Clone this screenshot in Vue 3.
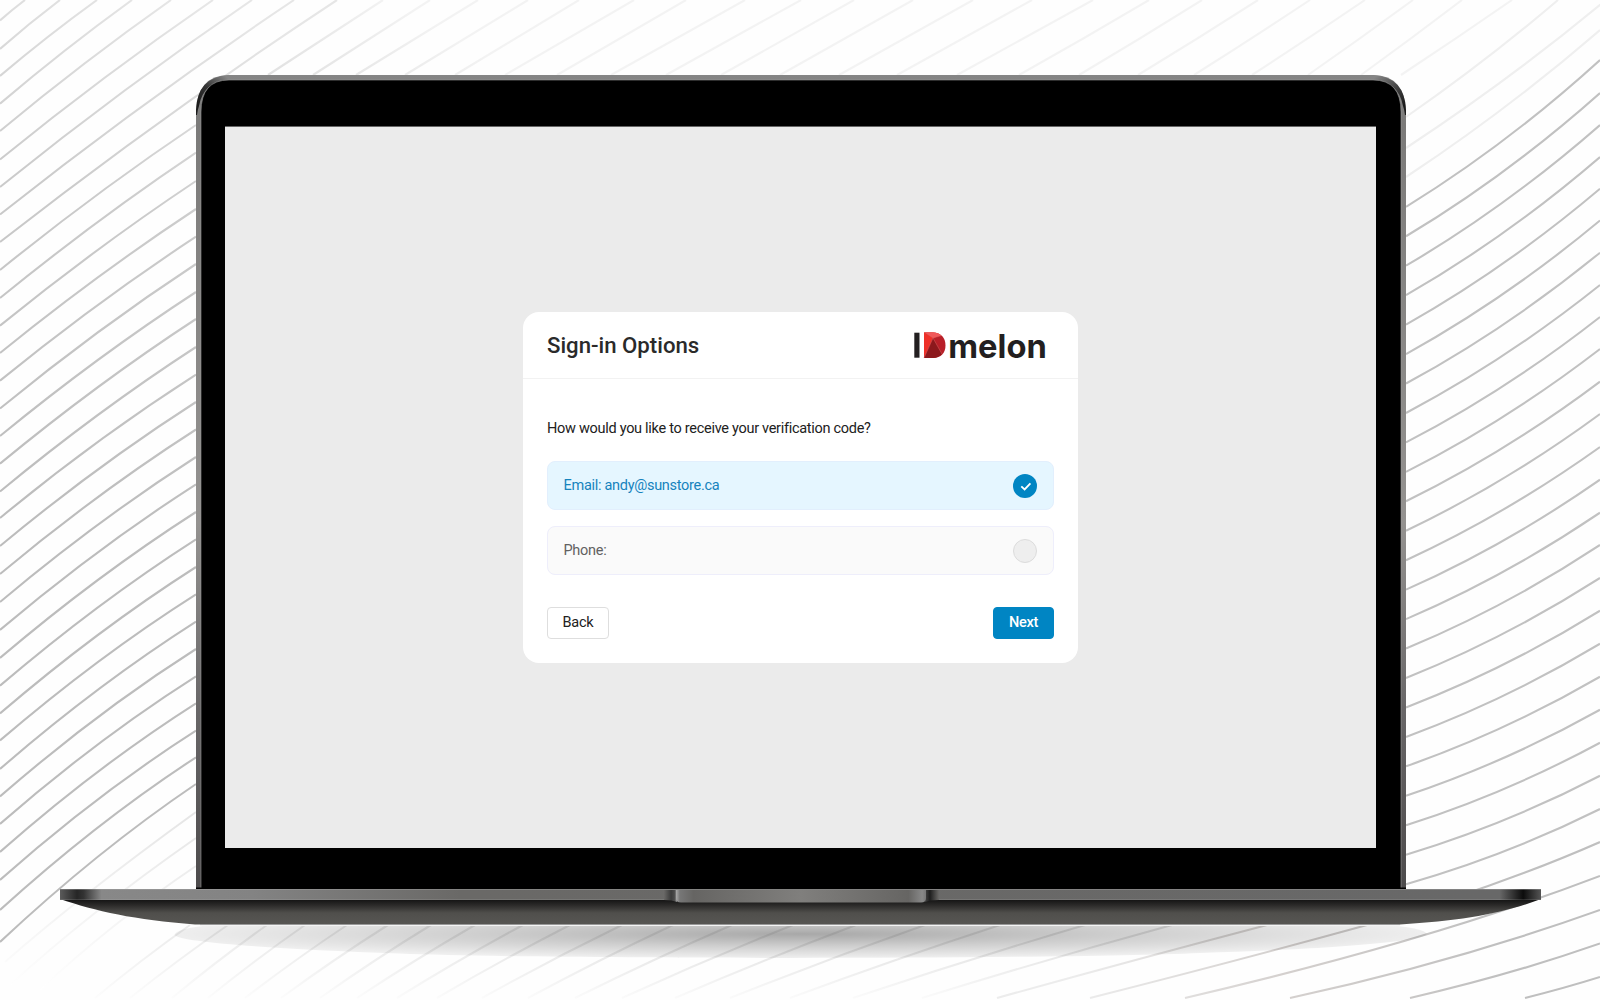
<script setup>
import { ref } from 'vue'

const options = [
  { id: 'email', label: 'Email: andy@sunstore.ca' },
  { id: 'phone', label: 'Phone:' },
]
const selected = ref('email')

const curve = (x0, y0, x1, y1, bx, by) =>
  `M${x0} ${y0}Q${(x0 + x1) / 2 + bx} ${(y0 + y1) / 2 + by} ${x1} ${y1}`

// Lines leaving the left edge of the page towards the laptop lid.
const leftStarts = [
  270, 298, 325.7, 353, 380.7, 408.5, 436, 463.7, 491.5, 518, 546, 574, 602,
  630, 658, 685.7, 713.5, 740.5, 769, 796.5, 824, 852, 880, 910, 942,
]
const leftEnds = [
  125, 152.7, 181, 209, 236.7, 264, 292, 319, 347, 374.7, 402, 429.5, 457,
  484.3, 512, 539.3, 567, 594.3, 621.7, 649, 676.3, 703.3, 730.7, 757.3, 784,
]
const leftLines = leftStarts.map((y, i) => curve(0, y, 196, leftEnds[i], -1, -6 - i * 0.25))

const cornerLines = [[20.5, 25], [49, 60], [76, 97], [103.7, 132], [131, 171], [159.5, 213], [187, 252], [214.5, 294], [242, 337]]
  .map(([y, x]) => curve(0, y, x, 0, -x * 0.012, -x * 0.022))

// Lines between the lid and the top edge of the page.
const topLines = [
  [268, 383], [313, 430], [356, 478], [405, 528], [455, 579], [505, 634],
  [557, 686], [611, 745], [666, 801], [721, 854], [780, 913], [839, 973],
  [897, 1032], [957, 1093], [1019, 1149], [1079, 1202], [1138, 1258],
  [1194, 1310], [1252, 1365], [1308, 1413], [1361, 1462], [1401, 1512],
].map(([a, b]) => curve(a, 75, b, 0, 0, a > 1000 ? 1 : 0))
const topRightLines = [
  curve(1406, 117, 1558, 0, 4, 3),
  curve(1406, 148, 1606, 0, 5, 5),
  curve(1406, 177, 1600, 30, 5, 6),
]

// Lines right of the lid.
const rightEnds = [
  60, 93, 125, 157, 188.7, 220.5, 252.7, 285, 317, 349, 381.7, 414, 447, 479.7,
  512.7, 545, 578, 610.7, 643.7, 676.7, 709.7, 742.7, 775.7, 809,
]
const rightLines = rightEnds.map((y, i) => curve(1406, 206.8 + i * 29.45, 1600, y, 3, 12 - i * 0.12))

const lowerRightLines = [
  'M997 998Q1130 961 1267 925Q1340 907 1406 884',
  'M1090 998Q1240 960 1367 925Q1500 886 1600 842',
  'M1185 998Q1430 941 1600 876',
  'M1290 998Q1455 962 1600 910',
  'M1410 998Q1510 975 1600 943.5',
  'M1525 998Q1565 988 1600 977',
]

const bottomLines = [
  [190, 95], [228, 130], [267, 172], [305, 208], [347, 245], [388, 281],
  [431, 320], [475, 357], [523, 397], [570, 437], [622, 482], [673, 528],
  [732, 575], [793, 622], [856, 675], [925, 730], [1000, 790], [1085, 853], [1172, 922],
].map(([a, b]) => ({ d: curve(b, 998, a, 925, -1, -2), opacity: Math.min(1, 0.4 + a / 1300) }))
const lowerLeftLines = [
  'M5 962Q80 896 196 812',
  'M10 985Q90 912 196 838',
  'M40 990Q110 924 196 866',
]
</script>

<template>
  <main class="stage">
    <svg class="scene" viewBox="0 0 1600 1000" aria-hidden="true">
      <defs>
        <linearGradient id="leftInk" gradientUnits="userSpaceOnUse" x1="0" y1="500" x2="180" y2="0">
          <stop offset="0" stop-color="#bcbcbc" />
          <stop offset="0.6" stop-color="#cbcbcb" />
          <stop offset="1" stop-color="#e6e6e6" />
        </linearGradient>
        <linearGradient id="topInk" gradientUnits="userSpaceOnUse" x1="250" y1="90" x2="330" y2="-40">
          <stop offset="0" stop-color="#dedede" />
          <stop offset="1" stop-color="#f3f3f3" />
        </linearGradient>
        <linearGradient id="bottomInk" gradientUnits="userSpaceOnUse" x1="0" y1="915" x2="0" y2="1000">
          <stop offset="0" stop-color="#777" stop-opacity="0.3" />
          <stop offset="1" stop-color="#777" stop-opacity="0.02" />
        </linearGradient>
        <linearGradient id="fadeInk" gradientUnits="userSpaceOnUse" x1="0" y1="820" x2="0" y2="990">
          <stop offset="0" stop-color="#e6e6e6" />
          <stop offset="1" stop-color="#fff" />
        </linearGradient>
        <linearGradient id="lowerRightInk" gradientUnits="userSpaceOnUse" x1="1080" y1="1000" x2="1500" y2="920">
          <stop offset="0" stop-color="#ececec" />
          <stop offset="0.5" stop-color="#d3cfcd" />
          <stop offset="1" stop-color="#bfbfbf" />
        </linearGradient>
        <linearGradient id="rim" x1="0" y1="0" x2="0" y2="1">
          <stop offset="0" stop-color="#858585" />
          <stop offset="0.06" stop-color="#7b7a79" />
          <stop offset="0.55" stop-color="#949290" />
          <stop offset="0.78" stop-color="#686667" />
          <stop offset="1" stop-color="#4c4a4b" />
        </linearGradient>
        <linearGradient id="cornerL" gradientUnits="userSpaceOnUse" x1="226" y1="76" x2="197" y2="104">
          <stop offset="0" stop-color="#858585" />
          <stop offset="0.55" stop-color="#333" />
          <stop offset="1" stop-color="#1b1b1b" />
        </linearGradient>
        <linearGradient id="cornerR" gradientUnits="userSpaceOnUse" x1="1376" y1="76" x2="1405" y2="104">
          <stop offset="0" stop-color="#858585" />
          <stop offset="0.55" stop-color="#444" />
          <stop offset="1" stop-color="#1b1b1b" />
        </linearGradient>
        <linearGradient id="deck" gradientUnits="userSpaceOnUse" x1="60" y1="0" x2="1541" y2="0">
          <stop offset="0" stop-color="#5b5b5b" />
          <stop offset="0.0115" stop-color="#262626" />
          <stop offset="0.016" stop-color="#333" />
          <stop offset="0.028" stop-color="#888" />
          <stop offset="0.13" stop-color="#838383" />
          <stop offset="0.27" stop-color="#6a6967" />
          <stop offset="0.972" stop-color="#686868" />
          <stop offset="0.984" stop-color="#222" />
          <stop offset="0.988" stop-color="#0c0c0c" />
          <stop offset="1" stop-color="#555" />
        </linearGradient>
        <linearGradient id="belly" x1="0" y1="0" x2="0" y2="1">
          <stop offset="0" stop-color="#111" />
          <stop offset="0.25" stop-color="#2c2b2a" />
          <stop offset="0.55" stop-color="#504f4c" />
          <stop offset="1" stop-color="#575653" />
        </linearGradient>
        <linearGradient id="notch" x1="0" y1="0" x2="1" y2="0">
          <stop offset="0" stop-color="#aaa" />
          <stop offset="0.015" stop-color="#777" />
          <stop offset="0.07" stop-color="#666563" />
          <stop offset="0.5" stop-color="#807f7d" />
          <stop offset="0.93" stop-color="#666563" />
          <stop offset="0.985" stop-color="#888" />
          <stop offset="1" stop-color="#777" />
        </linearGradient>
        <linearGradient id="notchSideL" x1="0" y1="0" x2="1" y2="0">
          <stop offset="0" stop-color="#696866" />
          <stop offset="0.55" stop-color="#3a3a3a" />
          <stop offset="0.8" stop-color="#4a4a4a" />
          <stop offset="1" stop-color="#999" />
        </linearGradient>
        <linearGradient id="notchSideR" x1="0" y1="0" x2="1" y2="0">
          <stop offset="0" stop-color="#444" />
          <stop offset="0.35" stop-color="#1e1e1e" />
          <stop offset="1" stop-color="#696866" />
        </linearGradient>
        <radialGradient id="shade" gradientUnits="userSpaceOnUse" cx="0" cy="0" r="1" gradientTransform="translate(801 934) scale(630 24)">
          <stop offset="0" stop-color="#000" stop-opacity="0.34" />
          <stop offset="0.5" stop-color="#000" stop-opacity="0.19" />
          <stop offset="1" stop-color="#000" stop-opacity="0.06" />
        </radialGradient>
      </defs>

      <g class="lines">
        <path v-for="d in cornerLines" :key="d" :d="d" stroke="url(#leftInk)" />
        <path v-for="d in leftLines" :key="d" :d="d" stroke="url(#leftInk)" />
        <path v-for="d in topLines" :key="d" :d="d" stroke="url(#topInk)" />
        <path v-for="d in topRightLines" :key="d" :d="d" stroke="#efefef" />
        <path v-for="d in rightLines" :key="d" :d="d" stroke="#c1c1c1" />
        <path v-for="d in lowerRightLines" :key="d" :d="d" stroke="url(#lowerRightInk)" />
        <path v-for="d in lowerLeftLines" :key="d" :d="d" stroke="url(#fadeInk)" />
      </g>

      <path d="M174.500 935C176 930 192 926.500 215 925H1385C1410 926.500 1425 930 1427 934C1420 942 1330 949 1200 953C1050 959.500 550 959.500 400 953.500C270 949 180 942 174.500 935Z" fill="url(#shade)" />
      <g class="lines">
        <path v-for="line in bottomLines" :key="line.d" :d="line.d" :opacity="line.opacity" stroke="url(#bottomInk)" />
      </g>

      <path d="M196 890V115Q196 75 229 75H1373Q1406 75 1406 115V890Z" fill="url(#rim)" />
      <path d="M196 115V110Q197 77 229 75V80Q203 82 199 106Q197.500 110 197 115Z" fill="url(#cornerL)" />
      <path d="M1406 115V110Q1405 77 1373 75V80Q1399 82 1403 106Q1404.500 110 1405 115Z" fill="url(#cornerR)" />
      <path d="M201 890V112Q201 80 229 80H1373Q1401 80 1401 112V890Z" stroke="#9a9a9a" stroke-width="0.6" />
      <rect x="196" y="887.500" width="1210" height="2" />
      <rect x="225" y="126" width="1151" height="1" fill="#666" />

      <path d="M60 899C95 911 135 920 195 924.500H1400C1462 921 1505 913 1541 899Z" fill="url(#belly)" />
      <rect x="200" y="924" width="1200" height="1" fill="#999" />
      <rect x="200" y="925" width="1200" height="1" fill="#f4f4f4" />
      <rect x="60" y="889" width="1481" height="11" fill="url(#deck)" />
      <rect x="60" y="889" width="1481" height="1" fill="#aaa" fill-opacity="0.4" />
      <rect x="60" y="899" width="1481" height="1" fill="#bbb" fill-opacity="0.18" />
      <path d="M664 890H677V902Q672 900 664 900Z" fill="url(#notchSideL)" />
      <path d="M925 890H939V900Q930 900 925 902Z" fill="url(#notchSideR)" />
      <path d="M676 890H926V898Q926 902.500 921 902.500H681Q676 902.500 676 898Z" fill="url(#notch)" />
    </svg>

    <section class="screen">
      <form class="card" @submit.prevent>
        <header class="card-head">
          <h1>Sign-in Options</h1>
          <svg class="logo" viewBox="0 -5 134 44" role="img" aria-label="IDmelon">
            <rect x="0.300" y="4.700" width="5.200" height="25" fill="#231f20" />
            <path d="M10 4.500H19C27 4.500 31.500 10 31.500 17.500S27 30 19 30H10Z" fill="#b81f28" />
            <path d="M10 4.500H19Q24 4.500 27 7.500L19 10L10 30Z" fill="#ee3028" />
            <path d="M11 4.500H19Q24 4.500 27.500 7.500L19 10Z" fill="#f0595a" />
            <path d="M19 10L10 30H19Q24 30 28 26Z" fill="#8c181c" />
            <path d="M19 10L10 30M19 10L28 26M11 4.500L19 10L27.500 7.500" fill="none" stroke="#d96360" stroke-width="0.500" />
            <text x="34.300" y="29.700" textLength="98.500" lengthAdjust="spacingAndGlyphs">melon</text>
          </svg>
        </header>

        <div class="card-body">
          <p>How would you like to receive your verification code?</p>
          <div class="options">
            <button
              v-for="option in options"
              :key="option.id"
              type="button"
              class="option"
              :class="{ active: selected === option.id }"
              @click="selected = option.id"
            >
              <span class="label">{{ option.label }}</span>
              <span class="mark">
                <svg v-if="selected === option.id" viewBox="0 0 24 24" aria-hidden="true">
                  <path d="M8.300 12.300L11.600 15.400L17.400 9.400" />
                </svg>
              </span>
            </button>
          </div>
          <footer>
            <button type="button" class="btn">Back</button>
            <button type="submit" class="btn primary">Next</button>
          </footer>
        </div>
      </form>
    </section>
  </main>
</template>

<style>
body {
  margin: 0;
  background: #fff;
}
</style>

<style scoped>
.stage {
  position: relative;
  box-sizing: border-box;
  width: 1600px;
  height: 1000px;
  padding: 127px 224px 152px 225px;
  overflow: hidden;
  background: #fefefe;
  font-family: Roboto, "Liberation Sans", sans-serif;
}
.scene {
  position: absolute;
  inset: 0;
  width: 1600px;
  height: 1000px;
}
.lines {
  fill: none;
  stroke-width: 2.1;
}
.screen {
  position: relative;
  display: flex;
  justify-content: center;
  align-items: flex-start;
  box-sizing: border-box;
  height: 721px;
  padding-top: 185px;
  background: #ebebeb;
}
.card {
  box-sizing: border-box;
  width: 555px;
  height: 351px;
  border-radius: 16px;
  background: #fff;
}
.card-head {
  display: flex;
  justify-content: space-between;
  align-items: center;
  box-sizing: border-box;
  height: 67px;
  padding: 0 30px 0 24px;
  border-bottom: 1px solid #f2f2f2;
}
h1 {
  margin: 0;
  color: #2a2a2a;
  font-size: 22.2px;
  font-weight: 500;
  line-height: 28px;
}
.logo {
  width: 134px;
  height: 44px;
}
.logo text {
  font-family: Inter, sans-serif;
  font-size: 33px;
  font-weight: 680;
  fill: #231f20;
}
.card-body {
  padding: 40px 24px 0;
}
p {
  margin: 0 0 22px;
  color: #212121;
  font-size: 14.5px;
  letter-spacing: -0.29px;
  line-height: 19px;
  padding-bottom: 1px;
}
.options {
  display: flex;
  flex-direction: column;
  gap: 16px;
}
.option {
  display: flex;
  justify-content: space-between;
  align-items: center;
  box-sizing: border-box;
  width: 100%;
  height: 49px;
  padding: 0 16px 0 15.5px;
  border: 1px solid #eeeefb;
  border-radius: 8px;
  background: #fafafa;
  color: #616161;
  font: 14.5px/20px Roboto, "Liberation Sans", sans-serif;
  letter-spacing: -0.29px;
}
.label {
  padding-top: 1px;
}
.option.active {
  border-color: #e2effd;
  background: #e5f6ff;
  color: #1683bd;
}
.mark {
  display: flex;
  box-sizing: border-box;
  width: 24px;
  height: 24px;
  border: 1px solid #dcdcdc;
  border-radius: 50%;
  background: #eee;
}
.active .mark {
  border: 0;
  background: #0085c3;
}
.mark svg {
  width: 24px;
  height: 24px;
  fill: none;
  stroke: #fff;
  stroke-width: 1.8;
}
footer {
  display: flex;
  justify-content: space-between;
  margin-top: 32px;
}
.btn {
  box-sizing: border-box;
  width: 62px;
  height: 32px;
  padding: 0;
  border: 1px solid #dedede;
  border-radius: 4px;
  background: #fff;
  color: #212121;
  font: 14.5px/20px Roboto, "Liberation Sans", sans-serif;
  letter-spacing: -0.25px;
}
.btn.primary {
  width: 61px;
  border-color: #0085c3;
  background: #0085c3;
  color: #fff;
  font-weight: 500;
}
</style>
